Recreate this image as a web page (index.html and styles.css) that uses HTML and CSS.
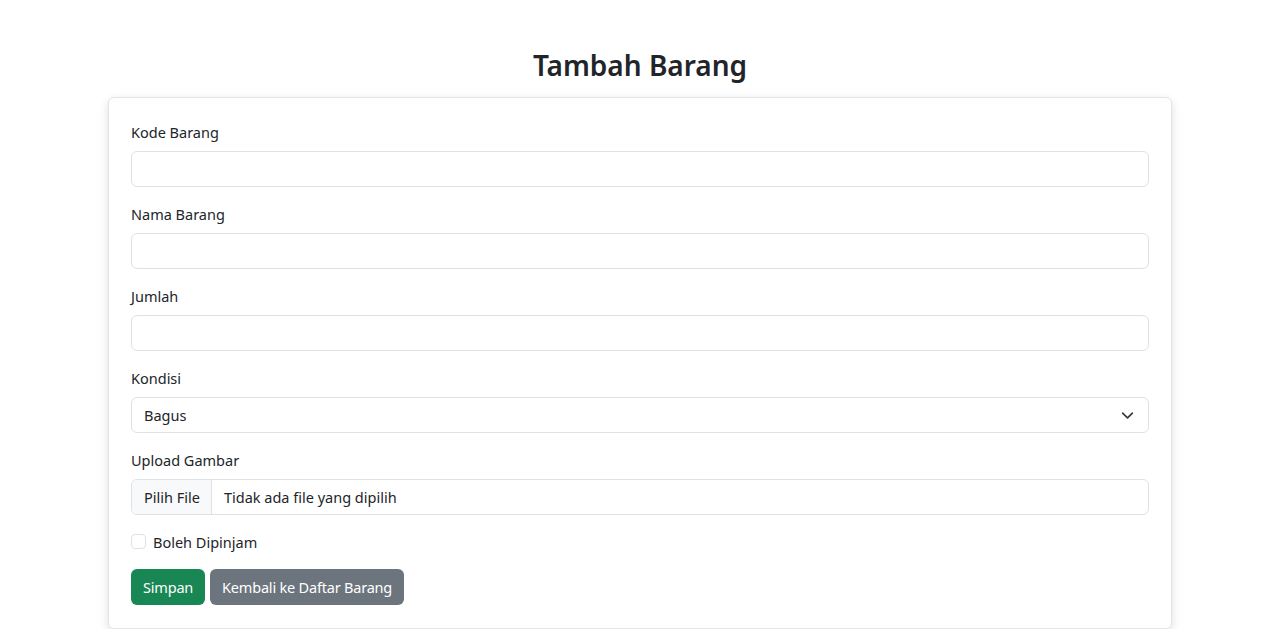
FILE: index.html
```html
<!DOCTYPE html>
<html lang="id">
<head>
<meta charset="utf-8">
<title>Tambah Barang</title>
<link rel="stylesheet" href="styles.css">
</head>
<body>
<div class="page">
  <h1 class="title">Tambah Barang</h1>
  <form class="card">
    <div class="group">
      <label class="label">Kode Barang</label>
      <input class="control" type="text">
    </div>
    <div class="group">
      <label class="label">Nama Barang</label>
      <input class="control" type="text">
    </div>
    <div class="group">
      <label class="label">Jumlah</label>
      <input class="control" type="text">
    </div>
    <div class="group">
      <label class="label">Kondisi</label>
      <div class="control select">
        <span>Bagus</span>
        <svg class="chev" width="16" height="16" viewBox="0 0 16 16"><path d="M2 5l6 6 6-6" fill="none" stroke="#343a40" stroke-width="2" stroke-linecap="round" stroke-linejoin="round"/></svg>
      </div>
    </div>
    <div class="group">
      <label class="label">Upload Gambar</label>
      <div class="control file">
        <span class="file-btn">Pilih File</span>
        <span class="file-name">Tidak ada file yang dipilih</span>
      </div>
    </div>
    <div class="check">
      <span class="box"></span>
      <span class="check-label">Boleh Dipinjam</span>
    </div>
    <div class="actions">
      <button type="button" class="btn btn-green">Simpan</button>
      <button type="button" class="btn btn-gray">Kembali ke Daftar Barang</button>
    </div>
  </form>
</div>
</body>
</html>
```

FILE: styles.css
```css
* { box-sizing: border-box; }
html, body { margin: 0; padding: 0; background: #fff; }
body {
  font-family: "Noto Sans", "Open Sans", sans-serif;
  font-size: 15px;
  color: #212529;
}
.page {
  width: 1064px;
  margin: 0 auto;
  padding-top: 45px;
}
.title {
  margin: 0 0 12px 0;
  text-align: center;
  font-size: 28px;
  font-weight: 600;
  line-height: 40px;
  color: #212529;
}
.card {
  display: block;
  background: #fff;
  border: 1px solid #e3e5e8;
  border-radius: 6px;
  box-shadow: 0 3px 10px rgba(0,0,0,0.13);
  padding: 23px 22px 23px 22px;
}
.group { margin-bottom: 16px; display: flex; flex-direction: column; }
.label {
  display: block;
  line-height: 22px;
  margin-bottom: 8px;
  font-size: 14.5px;
}
.control {
  height: 36px;
  width: 100%;
  border: 1px solid #dee2e6;
  border-radius: 6px;
  background: #fff;
  font: inherit;
  font-size: 14.5px;
  padding: 0 12px;
}
.select {
  display: flex;
  align-items: center;
  justify-content: space-between;
}
.chev { width: 13px; height: 13px; margin-right: 2px; }
.file {
  display: flex;
  align-items: stretch;
  padding: 0;
  overflow: hidden;
}
.file-btn {
  display: flex;
  align-items: center;
  padding: 0 11px 0 12px;
  background: #f8f9fa;
  border-right: 1px solid #dee2e6;
}
.file-name {
  display: flex;
  align-items: center;
  padding-left: 12px;
}
.check {
  display: flex;
  align-items: center;
  gap: 7px;
  margin-top: 0;
  height: 21px;
}
.box {
  width: 15px;
  height: 15px;
  border: 1px solid #dee2e6;
  border-radius: 4px;
  background: #fff;
}
.check-label { font-size: 14.5px; }
.actions {
  display: flex;
  gap: 5px;
  margin-top: 17px;
}
.btn {
  height: 36px;
  border: none;
  border-radius: 6px;
  padding: 0 12px;
  font: inherit;
  font-size: 14.5px;
  letter-spacing: -0.2px;
  color: #fff;
}
.btn-green { background: #198754; }
.btn-gray { background: #6c757d; }
```
